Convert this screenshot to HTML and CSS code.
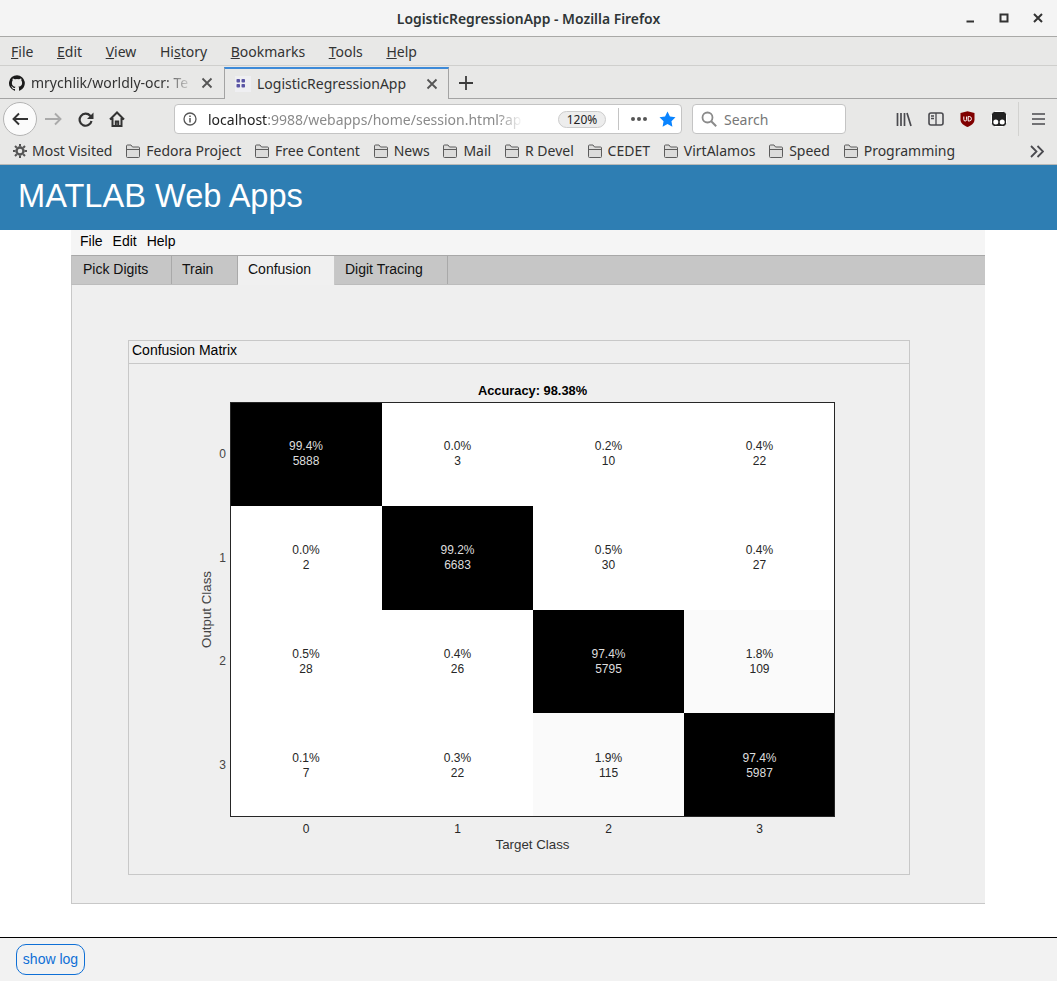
FILE: index.html
```html
<!DOCTYPE html>
<html lang="en">
<head>
  <meta charset="UTF-8" />
  <meta name="viewport" content="width=device-width, initial-scale=1.0"/>
  <title>LogisticRegressionApp</title>
  <link rel="stylesheet" href="styles.css">
</head>
<body>
  <svg class="defs" width="0" height="0">
    <symbol id="folder" viewBox="0 0 16 16">
      <path d="M1.500 13.500v-10.500q0-1 1-1h3.500l1.500 2h6q1 0 1 1v8.500q0 1-1 1h-11q-1 0-1-1z" fill="#dcdcdb" stroke="#5d5d5d"/>
      <path d="M1.500 6.500h13" stroke="#5d5d5d" fill="none"/>
    </symbol>
    <symbol id="close" viewBox="0 0 12 12">
      <path d="M1.500 1.500l9 9M10.500 1.500l-9 9" stroke="#555" stroke-width="1.800" fill="none"/>
    </symbol>
  </svg>

  <header class="titlebar">
    <span class="titlebar-text">LogisticRegressionApp - Mozilla Firefox</span>
    <div class="wm-buttons">
      <svg width="10" height="10" viewBox="0 0 10 10"><path d="M1.500 8.500h7.500" stroke="#333" stroke-width="2"/></svg>
      <svg width="10" height="10" viewBox="0 0 10 10"><rect x="1.500" y="1.500" width="7" height="7" fill="none" stroke="#333" stroke-width="2"/></svg>
      <svg width="10" height="10" viewBox="0 0 10 10"><path d="M1 1l8 8M9 1l-8 8" stroke="#333" stroke-width="2"/></svg>
    </div>
  </header>

  <nav class="menubar">
    <span><u>F</u>ile</span>
    <span><u>E</u>dit</span>
    <span><u>V</u>iew</span>
    <span>Hi<u>s</u>tory</span>
    <span><u>B</u>ookmarks</span>
    <span><u>T</u>ools</span>
    <span><u>H</u>elp</span>
  </nav>

  <div class="tabstrip">
    <div class="tab">
      <svg class="tab-icon" width="16" height="16" viewBox="0 0 16 16"><path fill="#1b1b1b" d="M8 .2a8 8 0 0 0-2.500 15.600c.4.100.5-.2.500-.4v-1.400c-2.200.5-2.700-1-2.700-1-.4-.9-.9-1.200-.9-1.200-.7-.5.100-.5.100-.5.800.1 1.200.8 1.200.8.700 1.200 1.900.9 2.300.7.100-.5.300-.9.500-1.100-1.800-.2-3.600-.9-3.600-4 0-.9.300-1.600.8-2.100-.1-.2-.4-1 .1-2.100 0 0 .7-.2 2.200.8a7.600 7.600 0 0 1 4 0c1.500-1 2.200-.8 2.200-.8.400 1.100.200 1.900.1 2.100.5.600.8 1.300.8 2.100 0 3.100-1.900 3.700-3.700 3.900.3.300.6.800.6 1.500v2.200c0 .2.100.5.600.4A8 8 0 0 0 8 .2z"/></svg>
      <span class="tab-title tab-title-fade">mrychlik/worldly-ocr: Te</span>
      <svg class="tab-close" width="12" height="12"><use href="#close"/></svg>
    </div>
    <div class="tab tab-active">
      <svg class="tab-icon" width="16" height="16" viewBox="0 0 16 16">
        <rect width="16" height="16" fill="#efeff2"/>
        <rect x="1.500" y="3" width="3.500" height="3.500" rx=".8" fill="#5a55a5"/><rect x="6.500" y="3" width="3.500" height="3.500" rx=".8" fill="#5a55a5"/>
        <rect x="1.500" y="8" width="3.500" height="3.500" rx=".8" fill="#5a55a5"/><rect x="6.500" y="8" width="3.500" height="3.500" rx=".8" fill="#5a55a5"/>
      </svg>
      <span class="tab-title">LogisticRegressionApp</span>
      <svg class="tab-close" width="12" height="12"><use href="#close"/></svg>
    </div>
    <svg class="tab-new" width="14" height="14" viewBox="0 0 14 14"><path d="M7 0v14M0 7h14" stroke="#3c3c3c" stroke-width="1.800"/></svg>
  </div>

  <div class="navbar">
    <div class="back-btn">
      <svg width="16" height="14" viewBox="0 0 16 14"><path d="M7 1.500L1.500 7 7 12.500M2 7h14" fill="none" stroke="#333" stroke-width="1.900"/></svg>
    </div>
    <svg class="nav-fwd" width="17" height="14" viewBox="0 0 17 14"><path d="M10 1.500L15.500 7 10 12.500M15 7H0" fill="none" stroke="#aaa" stroke-width="1.900"/></svg>
    <svg class="nav-reload" width="16" height="15" viewBox="0 0 16 15"><path d="M13.500 9a6 6 0 1 1-1.300-5.200l1.300 1.300" fill="none" stroke="#333" stroke-width="2.200"/><path d="M15.500 .5v6.500h-6.500z" fill="#333"/></svg>
    <svg class="nav-home" width="16" height="16" viewBox="0 0 16 16"><path d="M1 8.500l7-7 7 7M3.500 7v8h9V7M6.800 15v-4.500h2.400V15" fill="none" stroke="#333" stroke-width="2"/></svg>

    <div class="urlbar">
      <svg class="url-info" width="14" height="14" viewBox="0 0 14 14"><circle cx="7" cy="7" r="6" fill="none" stroke="#555" stroke-width="1.300"/><path d="M7 6v4.500M7 3.500v1.500" stroke="#555" stroke-width="1.500"/></svg>
      <span class="url-text"><span class="url-host">localhost</span>:9988/webapps/home/session.html?ap</span>
      <span class="zoom-pill">120%</span>
      <span class="url-divider"></span>
      <span class="url-dots"><i></i><i></i><i></i></span>
      <svg class="url-star" width="17" height="16" viewBox="0 0 18 17"><path d="M9 .5l2.600 5.400 5.900.8-4.300 4.100 1 5.900L9 13.900l-5.200 2.800 1-5.900L.5 6.700l5.900-.8z" fill="#0a84ff"/></svg>
    </div>

    <div class="searchbar">
      <svg width="16" height="16" viewBox="0 0 16 16"><circle cx="6.500" cy="6.500" r="5" fill="none" stroke="#8a8a8a" stroke-width="1.800"/><path d="M10 10l5.200 5.200" stroke="#8a8a8a" stroke-width="2"/></svg>
      <span>Search</span>
    </div>

    <div class="nav-tools">
      <svg width="16" height="15" viewBox="0 0 16 15"><path d="M1.500 1v13M5 1v13M8.500 1v13M11 1l4 13" fill="none" stroke="#4a4a4f" stroke-width="1.700"/></svg>
      <svg width="16" height="14" viewBox="0 0 16 14"><rect x="1" y="1" width="14" height="12" rx="2" fill="none" stroke="#4a4a4f" stroke-width="1.600"/><path d="M8 1v12M3 4h3M3 6.500h3" stroke="#4a4a4f" stroke-width="1.300"/></svg>
      <svg width="15" height="16" viewBox="0 0 15 16"><path d="M.5 2l7-1.800L14.500 2v6.500c0 4-3.500 6-7 7.500-3.500-1.500-7-3.500-7-7.500z" fill="#800000"/><path d="M3.800 5.500v3q0 1.500 1.400 1.500t1.400-1.500v-3M8.200 5.500v4.500h1q2.200 0 2.200-2.250t-2.200-2.250z" fill="none" stroke="#fff"/></svg>
      <svg width="16" height="16" viewBox="0 0 16 16"><rect x=".5" y=".5" width="15" height="15" rx="3" fill="#222" stroke="#fff"/><circle cx="4.800" cy="11" r="2.500" fill="#fff"/><circle cx="11.200" cy="11" r="2.500" fill="#fff"/></svg>
    </div>
    <span class="nav-sep"></span>
    <svg class="nav-menu" width="13" height="12" viewBox="0 0 13 12"><path d="M0 1h13M0 6h13M0 11h13" stroke="#4a4a4f" stroke-width="1.600"/></svg>
  </div>

  <div class="bookmarks">
    <span class="bm">
      <svg width="14" height="14" viewBox="0 0 14 14"><circle cx="7" cy="7" r="3.500" fill="none" stroke="#555" stroke-width="2.400"/><path d="M7 0v2.500M7 11.500V14M0 7h2.500M11.500 7H14M2 2l1.800 1.800M10.200 10.200L12 12M12 2l-1.800 1.800M3.800 10.200L2 12" stroke="#555" stroke-width="2"/></svg>
      Most Visited
    </span>
    <span class="bm"><svg width="16" height="16"><use href="#folder"/></svg>Fedora Project</span>
    <span class="bm"><svg width="16" height="16"><use href="#folder"/></svg>Free Content</span>
    <span class="bm"><svg width="16" height="16"><use href="#folder"/></svg>News</span>
    <span class="bm"><svg width="16" height="16"><use href="#folder"/></svg>Mail</span>
    <span class="bm"><svg width="16" height="16"><use href="#folder"/></svg>R Devel</span>
    <span class="bm"><svg width="16" height="16"><use href="#folder"/></svg>CEDET</span>
    <span class="bm"><svg width="16" height="16"><use href="#folder"/></svg>VirtAlamos</span>
    <span class="bm"><svg width="16" height="16"><use href="#folder"/></svg>Speed</span>
    <span class="bm"><svg width="16" height="16"><use href="#folder"/></svg>Programming</span>
    <svg class="bm-more" width="14" height="13" viewBox="0 0 14 13"><path d="M1 1l5.500 5.500L1 12M7.500 1l5.500 5.500L7.500 12" fill="none" stroke="#4a4a4f" stroke-width="1.800"/></svg>
  </div>

  <div class="app-header">MATLAB Web Apps</div>

  <main class="content">
    <div class="app-window">
      <div class="app-menu">
        <span>File</span>
        <span>Edit</span>
        <span>Help</span>
      </div>
      <div class="app-tabs">
        <div class="app-tab tab-pick">Pick Digits</div>
        <div class="app-tab tab-train">Train</div>
        <div class="app-tab app-tab-active">Confusion</div>
        <div class="app-tab tab-tracing">Digit Tracing</div>
      </div>
      <div class="tab-panel">
        <section class="group">
          <div class="group-title">Confusion Matrix</div>
          <div class="plot">
            <div class="plot-title">Accuracy: 98.38%</div>
            <div class="plot-ylabel"><span>Output Class</span></div>
            <div class="plot-yticks"><span>0</span><span>1</span><span>2</span><span>3</span></div>
            <div class="matrix">
              <div class="cell cell-dark">99.4%<br>5888</div>
              <div class="cell">0.0%<br>3</div>
              <div class="cell">0.2%<br>10</div>
              <div class="cell">0.4%<br>22</div>
              <div class="cell">0.0%<br>2</div>
              <div class="cell cell-dark">99.2%<br>6683</div>
              <div class="cell">0.5%<br>30</div>
              <div class="cell">0.4%<br>27</div>
              <div class="cell">0.5%<br>28</div>
              <div class="cell">0.4%<br>26</div>
              <div class="cell cell-dark">97.4%<br>5795</div>
              <div class="cell cell-tint">1.8%<br>109</div>
              <div class="cell">0.1%<br>7</div>
              <div class="cell">0.3%<br>22</div>
              <div class="cell cell-tint">1.9%<br>115</div>
              <div class="cell cell-dark">97.4%<br>5987</div>
            </div>
            <div class="plot-xticks"><span>0</span><span>1</span><span>2</span><span>3</span></div>
            <div class="plot-xlabel">Target Class</div>
          </div>
        </section>
      </div>
    </div>
  </main>

  <footer class="log-bar">
    <button class="log-btn">show log</button>
  </footer>
</body>
</html>
```

FILE: styles.css
```css
* { box-sizing: border-box; }
html, body { margin: 0; height: 981px; overflow: hidden; }
body { display: flex; flex-direction: column; background: #fff; font-family: "Liberation Sans", Arial, sans-serif; }
.defs { position: absolute; }

/* firefox chrome */
.titlebar { height: 37px; flex: none; display: flex; align-items: center; justify-content: center; position: relative; background: #f4f4f4; border-bottom: 1px solid #a9a9a7; font-family: "Noto Sans", sans-serif; font-size: 13.9px; font-weight: 600; color: #2e3436; }
.wm-buttons { position: absolute; right: 14px; top: 13px; display: flex; gap: 24px; }

.menubar { height: 29px; flex: none; display: flex; align-items: center; gap: 23.6px; padding: 0 0 0 11px; background: #e8e8e7; border-bottom: 1px solid #cfcfcd; font-family: "Noto Sans", sans-serif; font-size: 14px; color: #333; }

.tabstrip { height: 33px; flex: none; display: flex; align-items: stretch; padding-top: 1px; background: #e8e8e7; border-bottom: 1px solid #a3a3a3; font-family: "Noto Sans", sans-serif; font-size: 14px; color: #333; }
.tab { width: 224px; display: flex; align-items: center; padding: 0 11px 0 9px; }
.tab-active { width: 225px; margin-bottom: -1px; padding: 0 10px 1px; background: #e8e8e7; border-top: 2px solid #3d8ad8; border-left: 1px solid #a3a3a3; border-right: 1px solid #a3a3a3; }
.tab-icon { flex: none; margin-right: 6px; }
.tab-title { flex: 1; overflow: hidden; white-space: nowrap; }
.tab-title-fade { -webkit-mask-image: linear-gradient(to right, #000 82%, transparent 100%); mask-image: linear-gradient(to right, #000 82%, transparent 100%); }
.tab-close { flex: none; margin-left: 8px; }
.tab-new { flex: none; align-self: center; margin-left: 10px; }

.navbar { height: 40px; flex: none; display: flex; align-items: center; background: #e8e8e7; padding-left: 3px; }
.back-btn { flex: none; width: 34px; height: 34px; display: flex; align-items: center; justify-content: center; border: 1px solid #b4b4b4; border-radius: 50%; background: #fbfbfb; }
.nav-fwd { flex: none; margin-left: 8px; }
.nav-reload { flex: none; margin-left: 16px; }
.nav-home { flex: none; margin-left: 15px; }
.urlbar { flex: none; width: 508px; height: 30px; margin-left: 49px; display: flex; align-items: center; padding-left: 8px; background: #fff; border: 1px solid #c4c4c4; border-radius: 4px; font-family: "Noto Sans", sans-serif; font-size: 14px; color: #8a8a8a; }
.url-info { flex: none; }
.url-text { flex: none; width: 315px; margin-left: 11px; overflow: hidden; white-space: nowrap; -webkit-mask-image: linear-gradient(to right, #000 92%, transparent); mask-image: linear-gradient(to right, #000 92%, transparent); }
.url-host { color: #222; }
.zoom-pill { flex: none; width: 48px; height: 17px; margin-left: 35px; border: 1px solid #ccc; border-radius: 9px; background: #ededed; color: #222; font-size: 12px; line-height: 15px; text-align: center; }
.url-divider { flex: none; width: 1px; height: 22px; margin-left: 12px; background: #c4c4c4; }
.url-dots { flex: none; display: flex; gap: 2px; margin-left: 12px; }
.url-dots i { width: 4px; height: 4px; border-radius: 50%; background: #555; }
.url-star { flex: none; margin-left: 12px; }
.searchbar { flex: none; width: 154px; height: 30px; margin-left: 10px; display: flex; align-items: center; gap: 7px; padding-left: 8px; background: #fff; border: 1px solid #c4c4c4; border-radius: 4px; font-family: "Noto Sans", sans-serif; font-size: 14px; color: #777; }
.nav-tools { flex: none; display: flex; align-items: center; gap: 16px; margin-left: 50px; }
.nav-sep { flex: none; width: 1px; height: 34px; margin-left: 11px; background: #d2d2d0; }
.nav-menu { flex: none; margin-left: 13px; }

.bookmarks { height: 26px; flex: none; display: flex; align-items: center; gap: 12.8px; padding: 0 0 2px 13px; background: #e8e8e7; border-bottom: 1px solid #b9b9b7; font-family: "Noto Sans", sans-serif; font-size: 14px; color: #333; white-space: nowrap; position: relative; }
.bm { display: flex; align-items: center; gap: 5px; }
.bm-more { position: absolute; right: 13px; top: 6px; }

/* page */
.app-header { height: 65px; flex: none; padding-left: 18px; background: #2e7eb3; color: #fff; font-size: 32.6px; line-height: 61px; }
.content { flex: 1; min-height: 0; padding: 0 72px 0 71px; }
.app-window { width: 914px; }
.app-menu { height: 25px; display: flex; align-items: center; gap: 10px; padding: 0 0 4px 8px; background: #f5f5f5; font-size: 14px; color: #000; border-left: 1px solid #f5f5f5; }
.app-tabs { height: 30px; display: flex; background: #c6c6c6; border-top: 1px solid #a8a8a8; border-left: 1px solid #c0c0c0; border-bottom: 1px solid #bcbcbc; font-size: 14px; color: #111; }
.app-tab { height: 28px; padding: 5px 0 0 10px; line-height: 16px; border-right: 1px solid #a9a9a9; }
.tab-pick { width: 100px; padding-left: 11px; }
.tab-train { width: 66px; }
.tab-tracing { width: 113px; }
.app-tab-active { width: 97px; height: 29px; padding-left: 9px; background: #f0f0f0; border-left: 1px solid #f0f0f0; border-right: 1px solid #c8c8c8; }
.tab-panel { height: 619px; padding: 55px 0 0 56px; background: #efefef; border-left: 1px solid #c8c8c8; border-bottom: 1px solid #c8c8c8; }
.group { width: 782px; height: 535px; border: 1px solid #c8c8c8; }
.group-title { height: 23px; padding-left: 3px; border-bottom: 1px solid #c8c8c8; font-size: 14px; line-height: 19px; color: #000; }

.plot { display: grid; grid-template-columns: 17px 15px 605px; grid-template-rows: 19px 415px 20px 15px; justify-content: start; padding: 19px 0 0 69px; color: #262626; font-size: 12px; }
.plot-title { grid-column: 3; font-size: 12.85px; font-weight: bold; line-height: 15px; text-align: center; color: #000; }
.plot-ylabel { grid-column: 1; grid-row: 2; display: flex; align-items: center; justify-content: center; font-size: 13.3px; color: #444; }
.plot-ylabel span { white-space: nowrap; transform: rotate(-90deg); }
.plot-yticks { grid-column: 2; grid-row: 2; display: grid; grid-template-rows: repeat(4, 1fr); align-items: center; color: #444; }
.plot-yticks span { text-align: center; }
.matrix { grid-column: 3; grid-row: 2; display: grid; grid-template-columns: 152px 151px 151px 151px; grid-template-rows: repeat(4, 1fr); background: #fff; outline: 1px solid #262626; outline-offset: -1px; }
.cell { display: flex; align-items: center; justify-content: center; padding-top: 1px; text-align: center; line-height: 15px; }
.cell-dark { background: #000; color: #ddd; }
.cell-tint { background: #fafafa; }
.plot-xticks { grid-column: 3; grid-row: 3; display: grid; grid-template-columns: 152px 151px 151px 151px; text-align: center; padding-top: 5px; }
.plot-xlabel { grid-column: 3; grid-row: 4; text-align: center; font-size: 13.3px; line-height: 15px; color: #333; }

.log-bar { height: 44px; flex: none; padding: 6px 0 0 16px; background: #f2f2f2; border-top: 1px solid #000; }
.log-btn { width: 69px; height: 31px; padding: 0 0 2px; background: transparent; border: 1px solid #0e6fd6; border-radius: 10px; color: #0e6fd6; font-family: inherit; font-size: 14px; }
```
